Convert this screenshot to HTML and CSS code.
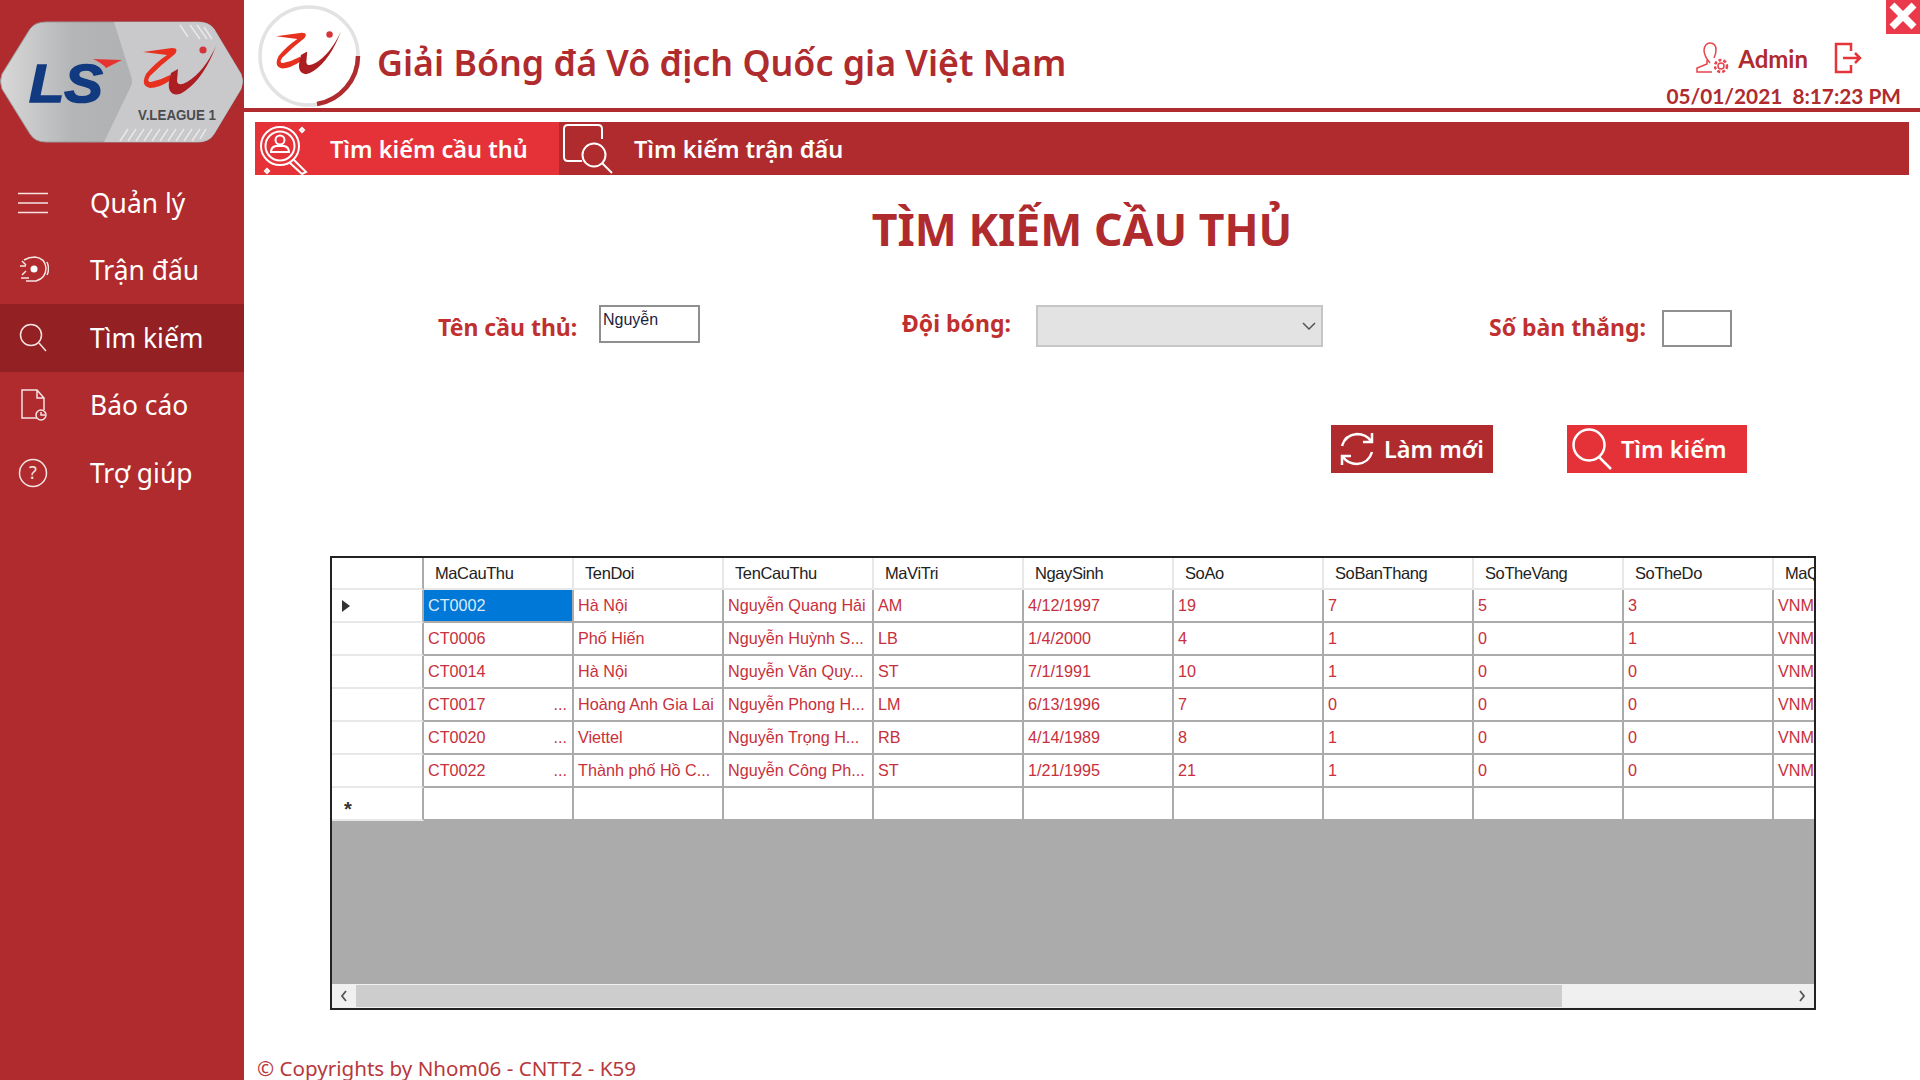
FILE: index.html
```html
<!DOCTYPE html>
<html lang="vi">
<head>
<meta charset="utf-8">
<title>Tìm kiếm cầu thủ</title>
<link rel="stylesheet" href="styles.css">
</head>
<body>
<svg class="defs" width="0" height="0" aria-hidden="true">
  <defs>
    <linearGradient id="metal" x1="0" y1="0" x2="1" y2="0">
      <stop offset="0" stop-color="#d8d8d8"/>
      <stop offset=".3" stop-color="#b4b5b7"/>
      <stop offset=".55" stop-color="#b0b1b3"/>
      <stop offset=".8" stop-color="#dcdcdc"/>
      <stop offset="1" stop-color="#c0c0c2"/>
    </linearGradient>
    <symbol id="swoosh" viewBox="0 0 76 56">
      <path fill="#e8301f" d="M1 7L30 3Q37 3 33 9Q20 19 8 31Q4 37 9 37Q19 35 28 30L29 35Q17 43 8 43Q-2 41 4 29Q13 18 25 10Z"/>
      <path fill="#ac1e22" d="M29 28Q25 41 28 46Q33 53 43 46Q62 33 74 1Q62 27 45 37Q36 42 35 36L36 24Z"/>
      <circle cx="61" cy="5" r="3.600" fill="#d4343a"/>
    </symbol>
  </defs>
</svg>
<div class="app">
  <aside class="sidebar">
    <svg class="brand" viewBox="0 0 243 122" width="243" height="122">
      <path class="brand-plate" d="M2 53L30 8Q35 1 46 1H198Q209 1 214 8L241 53Q244 60 241 68L214 113Q209 121 198 121H46Q35 121 30 113L2 68Q-1 60 2 53Z"/>
      <path class="brand-part" d="M114 1H198Q209 1 214 8L241 53Q244 60 241 68L214 113Q209 121 198 121H104L131 65Q133 60 131 55Z"/>
      <g class="brand-ticks">
        <path d="M190 4l10 14M197 4l10 14M204 6l8 12M180 4l8 12M120 120l8-12M128 120l8-12M136 120l8-12M144 120l8-12M152 120l8-12M160 120l8-12M168 120l8-12M176 120l8-12M184 120l8-12M192 120l8-12M200 118l6-10"/>
      </g>
      <text class="brand-ls" x="29" y="81" textLength="74" lengthAdjust="spacingAndGlyphs">LS</text>
      <path class="brand-flick" d="M93 38L122 39L106 47Q102 42 93 38Z"/>
      <use href="#swoosh" x="142" y="24" width="76" height="56"/>
      <text class="brand-league" x="138" y="99" textLength="78" lengthAdjust="spacingAndGlyphs">V.LEAGUE 1</text>
    </svg>
    <nav class="menu">
      <a class="menu-item">
        <svg class="menu-icon" viewBox="0 0 32 32" width="32" height="32"><path d="M1 6.500H31M1 16H31M1 25.500H31"/></svg>
        <span>Quản lý</span>
      </a>
      <a class="menu-item">
        <svg class="menu-icon" viewBox="0 0 32 32" width="32" height="32"><circle class="solid" cx="17" cy="15" r="3.500"/><path d="M7 6Q12 3 18 3Q28 4 29 14Q29 24 19 27H9M5 7l4 4M3 12h6M9 17l-4 4M4 24h8M30 8q3 7 0 13"/></svg>
        <span>Trận đấu</span>
      </a>
      <a class="menu-item active">
        <svg class="menu-icon" viewBox="0 0 32 32" width="32" height="32"><circle cx="14" cy="13" r="10.500"/><path d="M22 21L29 29"/></svg>
        <span>Tìm kiếm</span>
      </a>
      <a class="menu-item">
        <svg class="menu-icon" viewBox="0 0 32 32" width="32" height="32"><path d="M20 29H5V1H20L27 9V21M20 1V9H27"/><circle cx="24" cy="26" r="5"/><path d="M24 23V26H28"/></svg>
        <span>Báo cáo</span>
      </a>
      <a class="menu-item">
        <svg class="menu-icon" viewBox="0 0 32 32" width="32" height="32"><circle cx="16" cy="16" r="13.500"/><text class="help-mark" x="16" y="22">?</text></svg>
        <span>Trợ giúp</span>
      </a>
    </nav>
  </aside>

  <main class="main">
    <button class="close" aria-label="Đóng">
      <svg viewBox="0 0 34 34" width="34" height="34"><path d="M6 5L28 27M28 5L6 27"/></svg>
    </button>
    <header class="header">
      <svg class="seal" viewBox="0 0 104 104" width="104" height="104">
        <circle class="seal-ring" cx="52" cy="52" r="49"/>
        <path class="seal-arc" d="M101 52A49 49 0 0 1 60 100"/>
        <use href="#swoosh" x="18" y="26" width="68" height="50"/>
      </svg>
      <h1 class="title">Giải Bóng đá Vô địch Quốc gia Việt Nam</h1>
      <div class="account">
        <div class="user">
          <svg class="user-icon" viewBox="0 0 34 32" width="34" height="32">
            <path d="M15 21Q9 14 9 8Q10 1 15 1Q21 1 21 8Q21 12 19 16M12 18V22L2 26V30H17M21 20V22"/>
            <circle cx="26" cy="24" r="3"/>
            <circle class="gear" cx="26" cy="24" r="6"/>
          </svg>
          <span class="user-name">Admin</span>
          <svg class="logout-icon" viewBox="0 0 28 32" width="28" height="32"><path d="M17 9V2H2V30H17V23M9 16H26M21 11L26 16L21 21"/></svg>
        </div>
        <div class="clock">05/01/2021  8:17:23 PM</div>
      </div>
    </header>
    <div class="rule"></div>

    <div class="tabs">
      <a class="tab tab-active">
        <svg class="tab-icon" viewBox="0 0 56 54" width="56" height="54">
          <circle cx="24" cy="24" r="19"/><circle cx="24" cy="24" r="14.500"/>
          <circle cx="24" cy="18" r="4.500"/><path d="M15 30Q15 25 20 24H28Q33 25 33 30ZM38 38L50 50L46 52L34 41M44 8l2-2 2 2-2 2zM9 49l2-2 2 2-2 2z"/>
        </svg>
        <span>Tìm kiếm cầu thủ</span>
      </a>
      <a class="tab tab-second">
        <svg class="tab-icon" viewBox="0 0 52 52" width="52" height="52">
          <path d="M20 38H6Q2 38 2 34V6Q2 2 6 2H36Q40 2 40 6V16"/>
          <circle cx="32" cy="32" r="11.500"/><path d="M40 40L50 50"/>
        </svg>
        <span>Tìm kiếm trận đấu</span>
      </a>
    </div>

    <h2 class="page-title">TÌM KIẾM CẦU THỦ</h2>

    <form class="filters">
      <label class="field-label label-name">Tên cầu thủ:</label>
      <div class="textbox box-name">Nguyễn</div>
      <label class="field-label label-team">Đội bóng:</label>
      <div class="combo">
        <svg viewBox="0 0 14 8" width="14" height="8"><path d="M1 1L7 7L13 1"/></svg>
      </div>
      <label class="field-label label-goals">Số bàn thắng:</label>
      <div class="textbox box-goals"></div>
    </form>

    <div class="actions">
      <button type="button" class="action action-dark">
        <svg class="action-icon" viewBox="0 0 36 36" width="36" height="36">
          <path d="M3 15Q6 4 18 3Q27 3 32 10M33 2V11H24M33 21Q30 32 18 33Q9 33 4 26M3 34V25H12"/>
        </svg>
        <span>Làm mới</span>
      </button>
      <button type="button" class="action action-bright">
        <svg class="action-icon" viewBox="0 0 40 42" width="40" height="42">
          <circle cx="17" cy="17" r="15.500"/><path d="M27 29L39 41"/>
        </svg>
        <span>Tìm kiếm</span>
      </button>
    </div>

    <section class="grid">
      <div class="grid-view">
        <table class="data">
          <thead>
            <tr>
              <th class="rowhead"></th>
              <th>MaCauThu</th><th>TenDoi</th><th>TenCauThu</th><th>MaViTri</th><th>NgaySinh</th>
              <th>SoAo</th><th>SoBanThang</th><th>SoTheVang</th><th>SoTheDo</th><th>MaQuocTich</th>
            </tr>
          </thead>
          <tbody>
            <tr>
              <td class="rowhead"><span class="row-arrow"></span></td>
              <td class="selected">CT0002</td><td>Hà Nội</td><td>Nguyễn Quang Hải</td><td>AM</td><td>4/12/1997</td><td>19</td><td>7</td><td>5</td><td>3</td><td>VNM</td>
            </tr>
            <tr>
              <td class="rowhead"></td>
              <td>CT0006</td><td>Phố Hiến</td><td>Nguyễn Huỳnh S...</td><td>LB</td><td>1/4/2000</td><td>4</td><td>1</td><td>0</td><td>1</td><td>VNM</td>
            </tr>
            <tr>
              <td class="rowhead"></td>
              <td>CT0014</td><td>Hà Nội</td><td>Nguyễn Văn Quy...</td><td>ST</td><td>7/1/1991</td><td>10</td><td>1</td><td>0</td><td>0</td><td>VNM</td>
            </tr>
            <tr>
              <td class="rowhead"></td>
              <td><div class="clipped">CT0017<span>...</span></div></td><td>Hoàng Anh Gia Lai</td><td>Nguyễn Phong H...</td><td>LM</td><td>6/13/1996</td><td>7</td><td>0</td><td>0</td><td>0</td><td>VNM</td>
            </tr>
            <tr>
              <td class="rowhead"></td>
              <td><div class="clipped">CT0020<span>...</span></div></td><td>Viettel</td><td>Nguyễn Trọng H...</td><td>RB</td><td>4/14/1989</td><td>8</td><td>1</td><td>0</td><td>0</td><td>VNM</td>
            </tr>
            <tr>
              <td class="rowhead"></td>
              <td><div class="clipped">CT0022<span>...</span></div></td><td>Thành phố Hồ C...</td><td>Nguyễn Công Ph...</td><td>ST</td><td>1/21/1995</td><td>21</td><td>1</td><td>0</td><td>0</td><td>VNM</td>
            </tr>
            <tr class="new-row">
              <td class="rowhead"><span class="row-star">*</span></td>
              <td></td><td></td><td></td><td></td><td></td><td></td><td></td><td></td><td></td><td></td>
            </tr>
          </tbody>
        </table>
      </div>
      <div class="hscroll">
        <svg class="hscroll-arrow" viewBox="0 0 8 12" width="8" height="12"><path d="M6 1L2 6L6 11"/></svg>
        <div class="hscroll-track"><div class="hscroll-thumb"></div></div>
        <svg class="hscroll-arrow" viewBox="0 0 8 12" width="8" height="12"><path d="M2 1L6 6L2 11"/></svg>
      </div>
    </section>

    <footer class="copyright">© Copyrights by Nhom06 - CNTT2 - K59</footer>
  </main>
</div>
</body>
</html>
```
FILE: styles.css
```css
* { box-sizing: border-box; }
html, body { margin: 0; height: 100%; overflow: hidden; background: #fff; }
body { font-family: "Noto Sans", "Open Sans", sans-serif; color: #b02a2e; }
.defs { position: absolute; }
.app { display: flex; width: 1920px; height: 1080px; }

/* Sidebar */
.sidebar { width: 244px; flex: none; background: #b02b2e; padding-top: 21px; }
.brand { display: block; }
.brand-plate { fill: url(#metal); stroke: #9b9b9d; stroke-width: 1; }
.brand-part { fill: #c9c9cb; }
.brand-ticks path { fill: none; stroke: #e8e8e8; stroke-width: 1.500; }
.brand-ls { font: italic 700 53px "Liberation Sans", sans-serif; fill: #123a80; stroke: #123a80; stroke-width: 1.500; }
.brand-flick { fill: #e5342f; }
.brand-league { font: 700 14.500px "Liberation Sans", sans-serif; fill: #4a4c50; }
.menu { margin-top: 26px; display: flex; flex-direction: column; }
.menu-item { display: flex; align-items: center; height: 67.500px; padding-left: 17px; gap: 41px; color: #fff; font-size: 26.400px; }
.menu-item.active { background: #932022; }
.menu-icon { flex: none; }
.menu-icon path, .menu-icon circle { fill: none; stroke: #f5e4e4; stroke-width: 1.500; }
.menu-icon .solid { fill: #fff; stroke: none; }
.help-mark { font: 400 18px "Noto Sans", sans-serif; fill: #f5e4e4; text-anchor: middle; }

/* Main column */
.main { position: relative; flex: 1; min-width: 0; display: flex; flex-direction: column; }
.close { position: absolute; top: 0; right: 0; width: 34px; height: 34px; padding: 0; border: 0; background: #e9394a; }
.close svg { display: block; }
.close path { fill: none; stroke: #fff; stroke-width: 7; }

.header { height: 108px; display: flex; align-items: flex-start; padding-left: 13px; flex: none; }
.seal { flex: none; margin-top: 4px; }
.seal-ring { fill: none; stroke: #e2e2e2; stroke-width: 3.500; }
.seal-arc { fill: none; stroke: #b02b2e; stroke-width: 4.500; }
.title { margin: 38px 0 0 16px; font-size: 35.750px; line-height: 48px; font-weight: 600; color: #b02b2e; white-space: nowrap; }
.account { margin-left: auto; margin-top: 40px; padding-right: 19px; display: flex; flex-direction: column; align-items: flex-end; }
.user { display: flex; align-items: center; height: 36px; padding-right: 39px; }
.user-icon path, .user-icon circle { fill: none; stroke: #e5454c; stroke-width: 1.500; }
.user-icon .gear { stroke-width: 2.500; stroke-dasharray: 3 2; }
.user-name { margin: 0 26px 0 9px; font: 700 24px "Lato", sans-serif; color: #b02b2e; }
.logout-icon path { fill: none; stroke: #e5343a; stroke-width: 2.500; }
.clock { white-space: pre; margin-top: 7px; font: 700 20.800px/26px "Lato", sans-serif; color: #b02b2e; }
.rule { height: 4px; background: #b02b2e; flex: none; }

/* Tabs */
.tabs { margin: 10px 11px 0; height: 53px; display: flex; flex: none; background: #b02b2e; color: #fff; }
.tab { display: flex; align-items: center; font-size: 23.500px; font-weight: 600; white-space: nowrap; }
.tab-active { width: 304px; background: #e53238; padding-left: 1px; gap: 18px; }
.tab-second { padding-left: 3px; gap: 20px; }
.tab-icon { flex: none; }
.tab-icon path, .tab-icon circle { fill: none; stroke: #fff; stroke-width: 2; }

.page-title { margin: 26px 0 0; height: 55px; text-align: center; font-size: 44.600px; line-height: 55px; font-weight: 700; color: #b02b2e; flex: none; }

/* Filters */
.filters { display: flex; align-items: flex-start; margin-top: 49px; padding-left: 194px; height: 42px; flex: none; }
.field-label { font-size: 23px; line-height: 32px; font-weight: 700; color: #c0302f; white-space: nowrap; }
.label-name { width: 161px; margin-top: 6px; }
.label-team { width: 134px; margin: 2px 0 0 202px; }
.label-goals { width: 173px; margin: 6px 0 0 166px; }
.textbox { border: 2px solid #8f8f8f; background: #fff; }
.box-name { width: 101px; height: 38px; font: 16px/20px "Liberation Sans", sans-serif; color: #1a2340; padding: 3px 2px 0; }
.box-goals { width: 70px; height: 37px; margin-top: 5px; }
.combo { width: 287px; height: 42px; background: #e3e3e3; border: 2px solid #c6c6c6; display: flex; align-items: center; justify-content: flex-end; padding-right: 5px; }
.combo path { fill: none; stroke: #555; stroke-width: 1.500; }

/* Actions */
.actions { display: flex; justify-content: flex-end; gap: 74px; margin-top: 78px; padding-right: 173px; flex: none; }
.action { height: 48px; padding: 0; border: 0; color: #fff; display: flex; align-items: center; font: 600 23.500px "Noto Sans", sans-serif; }
.action-dark { width: 162px; background: #b02b2e; padding-left: 8px; gap: 9px; }
.action-bright { width: 180px; background: #e53238; padding-left: 5px; gap: 9px; }
.action-icon { flex: none; }
.action-icon path, .action-icon circle { fill: none; stroke: #fff; stroke-width: 2.500; }

/* Data grid */
.grid { margin: 83px 0 0 86px; width: 1486px; height: 454px; border: 2px solid #222; display: flex; flex-direction: column; flex: none; }
.grid-view { flex: 1; min-height: 0; overflow: hidden; background: #ababab; }
.data { table-layout: fixed; width: 1592px; border-collapse: separate; border-spacing: 0; font: 16.200px "Liberation Sans", sans-serif; background: #fff; }
.data th, .data td { width: 150px; padding: 0; white-space: nowrap; overflow: hidden; }
.data th { height: 32px; padding-left: 11px; font-size: 16.500px; font-weight: 400; text-align: left; color: #222; letter-spacing: -.4px; border-right: 2px solid #e8e8e8; border-bottom: 2px solid #e8e8e8; }
.data td { height: 33px; padding-left: 4px; color: #c7303c; border-right: 2px solid #ababab; border-bottom: 2px solid #ababab; }
.data .rowhead { width: 92px; padding: 0 0 0 10px; border-right: 2px solid #ababab; border-bottom: 2px solid #e8e8e8; }
.data .selected { background: #0078d7; color: #dbe9f6; }
.clipped { display: flex; justify-content: space-between; padding-right: 5px; }
.row-arrow { display: block; width: 0; height: 0; border-style: solid; border-width: 6px 0 6px 8px; border-color: transparent transparent transparent #333; }
.row-star { display: block; margin: 10px 0 0 2px; font: 700 20px/20px "Liberation Sans", sans-serif; color: #333; }
.hscroll { height: 24px; flex: none; display: flex; align-items: center; background: #f0f0f0; }
.hscroll-arrow { flex: none; margin: 0 8px; }
.hscroll-arrow path { fill: none; stroke: #555; stroke-width: 1.800; }
.hscroll-track { flex: 1; height: 100%; padding: 1px 0; }
.hscroll-thumb { width: 1206px; height: 100%; background: #cdcdcd; }

.copyright { margin: 44px 0 0 13px; font-size: 20.600px; line-height: 28px; color: #b8383c; }
```
